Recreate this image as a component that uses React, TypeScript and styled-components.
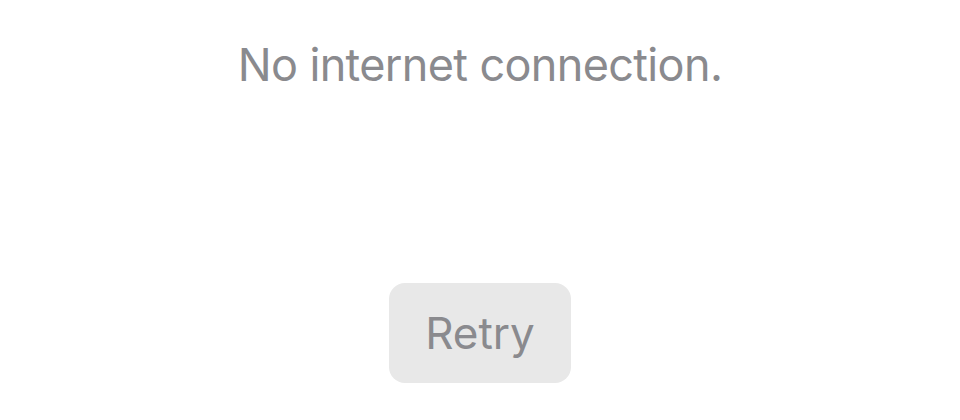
import React from 'react'
import styled, { createGlobalStyle } from 'styled-components'

const GlobalStyle = createGlobalStyle`
  html, body {
    margin: 0;
    padding: 0;
    background: #ffffff;
  }
  body {
    font-family: Inter, 'Noto Sans', sans-serif;
  }
`

const Screen = styled.main`
  width: 960px;
  height: 420px;
  display: flex;
  flex-direction: column;
  align-items: center;
  box-sizing: border-box;
  padding-top: 37px;
`

const Message = styled.p`
  margin: 0;
  font-size: 45px;
  line-height: 56px;
  font-weight: 400;
  color: #8a8a8e;
  letter-spacing: -0.65px;
`

const RetryButton = styled.button`
  margin-top: 190px;
  width: 182px;
  height: 100px;
  border: none;
  border-radius: 16px;
  background: #e8e8e8;
  color: #8a8a8e;
  font-family: Inter, 'Noto Sans', sans-serif;
  font-size: 44px;
  font-weight: 400;
  cursor: pointer;
`

const App = () => (
  <>
    <GlobalStyle />
    <Screen>
      <Message>No internet connection.</Message>
      <RetryButton>Retry</RetryButton>
    </Screen>
  </>
)

export default App
